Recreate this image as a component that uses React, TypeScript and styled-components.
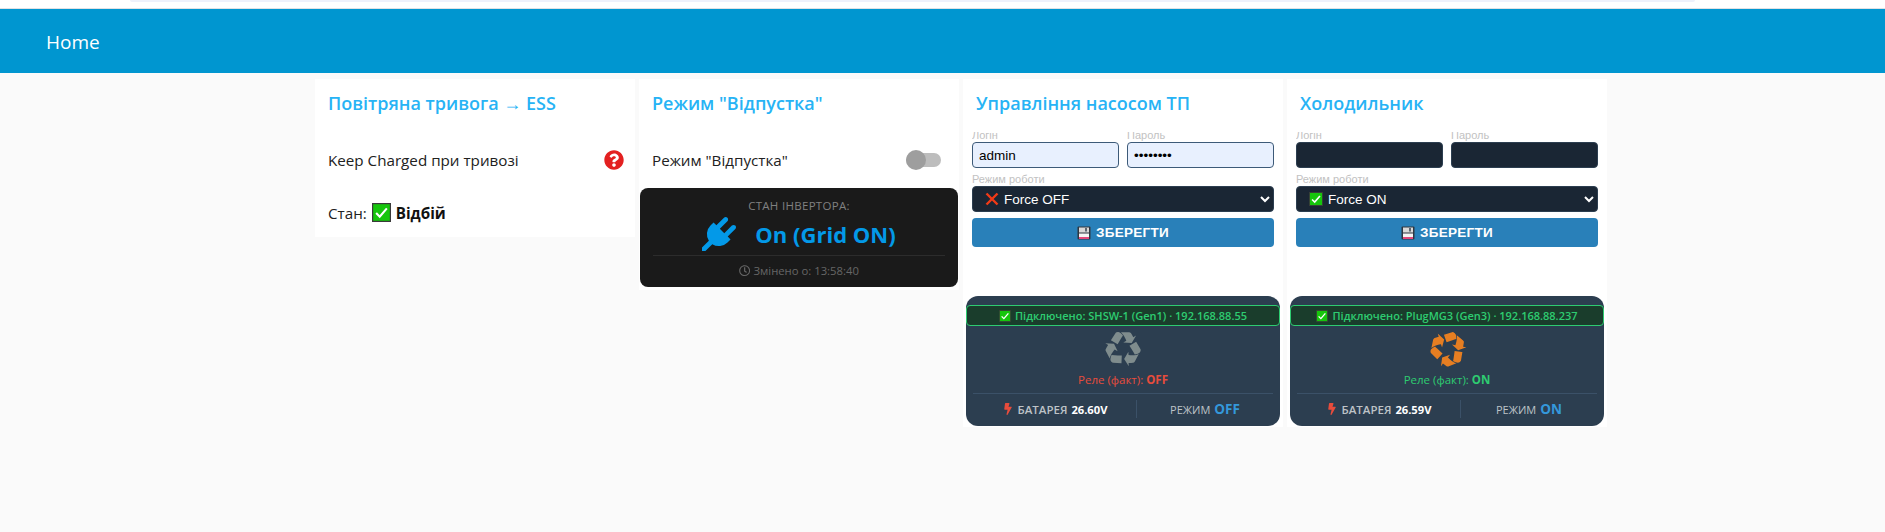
import React from "react";
import styled, { createGlobalStyle } from "styled-components";
import { FaBolt, FaRegClock, FaQuestionCircle } from "react-icons/fa";

const Global = createGlobalStyle`
  html, body { margin: 0; padding: 0; background: #fafafa; }
  body { font-family: "Open Sans", "Liberation Sans", sans-serif; height: 532px; overflow: hidden; }
`;

const TopStrip = styled.div`
  height: 8px;
  background: #fff;
  border-bottom: 1px solid #dfe1e5;
`;
const TabEdge = styled.div`
  height: 2px;
  margin: 0 190px 0 130px;
  background: #eef1fb;
  border-radius: 0 0 2px 2px;
`;
const Header = styled.header`
  height: 62px;
  padding: 2px 0 0 46px;
  background: #0096d0;
  color: #fff;
  display: flex;
  align-items: center;
  font-size: 19px;
  font-weight: 500;
`;
const Columns = styled.main`
  display: flex;
  align-items: flex-start;
  gap: 4px;
  padding: 6px 0 0 315px;
`;
const Card = styled.section`
  width: 320px;
  background: #fff;
  display: flex;
  flex-direction: column;
`;
const Title = styled.h2`
  margin: 0;
  padding: 10px 13px 0;
  height: 43px;
  font-size: 18px;
  line-height: 28px;
  font-weight: 600;
  color: #27b3f5;
`;
const Row = styled.div<{ $h: number }>`
  height: ${(p) => p.$h}px;
  display: flex;
  align-items: center;
  justify-content: space-between;
  padding: 0 13px;
  font-size: 15.2px;
  color: #212121;
`;
const Strong = styled.b`
  font-weight: 700;
  color: #111;
`;
const StatusText = styled.span`
  display: inline-flex;
  align-items: center;
  gap: 5px;
`;
const Help = styled(FaQuestionCircle)`
  color: #e32020;
  font-size: 20px;
  margin-right: -2px;
`;
const Switch = styled.div`
  position: relative;
  width: 35px;
  height: 14px;
  margin-right: 5px;
  border-radius: 7px;
  background: #bdbdbd;
`;
const Thumb = styled.div`
  position: absolute;
  left: 0;
  top: -3px;
  width: 20px;
  height: 20px;
  border-radius: 50%;
  background: #9e9e9e;
`;
const Inverter = styled.div`
  margin: 0 1px 3px;
  height: 99px;
  box-sizing: border-box;
  background: #1a1a1a;
  border-radius: 8px;
  padding: 0 13px;
  display: flex;
  flex-direction: column;
  align-items: center;
`;
const InverterLabel = styled.div`
  margin-top: 10px;
  font-size: 11.5px;
  line-height: 16px;
  letter-spacing: 0.3px;
  color: #808080;
`;
const InverterState = styled.div`
  display: flex;
  align-items: center;
  gap: 19px;
  height: 40px;
  font-size: 22px;
  font-weight: 700;
  color: #0399e8;
`;
const InverterTime = styled.div`
  align-self: stretch;
  margin-top: 1px;
  border-top: 1px solid #2c2c2c;
  padding-top: 7px;
  display: flex;
  justify-content: center;
  align-items: center;
  gap: 3px;
  font-size: 11.3px;
  line-height: 16px;
  color: #666;
`;
const Form = styled.div`
  padding: 0 9px;
  font-family: "Liberation Sans", Arial, sans-serif;
`;
const CredRow = styled.div`
  display: grid;
  grid-template-columns: 1fr 1fr;
  grid-template-rows: 36px;
  gap: 8px;
  height: 36px;
  overflow: hidden;
  align-items: end;
`;
const Field = styled.div`
  display: flex;
  flex-direction: column;
`;
const FieldLabel = styled.label`
  display: block;
  font-size: 11px;
  line-height: 14px;
  height: 14px;
  color: #c2c2c2;
`;
const Input = styled.div<{ $filled?: boolean }>`
  height: 26px;
  box-sizing: border-box;
  border: 1px solid ${(p) => (p.$filled ? "#3d5a78" : "#2c3e50")};
  border-radius: 4px;
  background: ${(p) => (p.$filled ? "#e8f0fe" : "#1a2634")};
  color: #000;
  padding: 0 6px;
  display: flex;
  align-items: center;
  font-size: 13.5px;
`;
const ModeLabel = styled(FieldLabel)`
  margin-top: 4px;
`;
const Select = styled.div`
  position: relative;
  height: 26px;
  box-sizing: border-box;
  border: 1px solid #2c3e50;
  border-radius: 4px;
  background: #1a2634;
  color: #fff;
  padding-left: 12px;
  display: flex;
  align-items: center;
  gap: 5px;
  font-size: 13.5px;
`;
const Chevron = styled.svg`
  position: absolute;
  right: 3px;
  top: 8px;
  width: 10px;
  height: 8px;
`;
const SaveButton = styled.button`
  margin-top: 6px;
  width: 100%;
  height: 29px;
  border: 0;
  border-radius: 4px;
  background: #2980b9;
  color: #fff;
  font: 700 13.5px "Liberation Sans", Arial, sans-serif;
  letter-spacing: 0.3px;
  display: flex;
  align-items: center;
  justify-content: center;
  gap: 5px;
`;
const Panel = styled.div`
  margin: 49px 3px 1px;
  height: 130px;
  box-sizing: border-box;
  background: #2c3e50;
  border-radius: 12px;
  display: flex;
  flex-direction: column;
  align-items: center;
  font-family: "Open Sans", sans-serif;
`;
const Connected = styled.div`
  margin-top: 9px;
  align-self: stretch;
  height: 21px;
  box-sizing: border-box;
  border: 1px solid #2ecc71;
  border-radius: 4px;
  background: #1a3d2c;
  color: #2ecc71;
  font-size: 11px;
  font-weight: 600;
  display: flex;
  align-items: center;
  justify-content: center;
  gap: 4px;
`;
const RecycleIcon = styled.svg<{ $on?: boolean }>`
  margin-top: 6px;
  width: 36px;
  height: 36px;
  margin-bottom: 1px;
  fill: ${(p) => (p.$on ? "#e67e22" : "#7f8c8d")};
  transform: rotate(${(p) => (p.$on ? 40 : 0)}deg);
`;
const Relay = styled.div<{ $on?: boolean }>`
  margin-top: 3px;
  font-size: 11.5px;
  line-height: 16px;
  color: ${(p) => (p.$on ? "#2ecc71" : "#e74c3c")};
`;
const Stats = styled.div`
  margin: 5px 7px 0;
  align-self: stretch;
  border-top: 1px solid #3b5168;
  padding-top: 6px;
  display: grid;
  grid-template-columns: 163px 1fr;
`;
const Stat = styled.div<{ $divider?: boolean }>`
  height: 18px;
  display: flex;
  align-items: center;
  justify-content: center;
  gap: 4px;
  font-size: 11px;
  color: #bdc3c7;
  border-left: ${(p) => (p.$divider ? "1px solid #3b5168" : "0")};
`;
const Bolt = styled(FaBolt)`
  color: #e74c3c;
  font-size: 12px;
`;
const StatLabel = styled.span<{ $bold?: boolean }>`
  font-size: ${(p) => (p.$bold ? 11.5 : 11)}px;
  font-weight: ${(p) => (p.$bold ? 600 : 400)};
`;
const Voltage = styled.b`
  color: #fff;
  font-size: 11.2px;
  font-weight: 700;
`;
const Mode = styled.b`
  color: #3498db;
  font-size: 13.5px;
  font-weight: 700;
`;

const CheckEmoji = ({ size = 16 }: { size?: number }) => (
  <svg width={size} height={size} viewBox="0 0 16 16" aria-hidden>
    <rect x="0.5" y="0.5" width="15" height="15" fill="#16c60c" stroke="#3a3a3a" />
    <path d="M3.5 8.5 6.5 11.5 12.5 4.5" fill="none" stroke="#fff" strokeWidth="1.8" />
  </svg>
);
const CrossEmoji = () => (
  <svg width="14" height="14" viewBox="0 0 14 14" aria-hidden>
    <path d="M1.5 1.5 12.5 12.5M12.5 1.5 1.5 12.5" stroke="#f03a17" strokeWidth="2.4" />
  </svg>
);
const FloppyEmoji = () => (
  <svg width="14" height="14" viewBox="0 0 14 14" aria-hidden>
    <rect x="0.5" y="0.5" width="13" height="13" rx="1" fill="#2f3640" />
    <rect x="2" y="1.5" width="10" height="5" fill="#d8d8d8" />
    <rect x="8" y="2" width="2" height="3.5" fill="#5c6670" />
    <rect x="2" y="7.5" width="10" height="3.5" fill="#f4f4f4" />
    <rect x="2" y="11" width="10" height="2" fill="#e3477a" />
  </svg>
);
const PlugIcon = () => (
  <svg width="34" height="34" viewBox="0 0 1792 1792" fill="currentColor" aria-hidden>
    <path d="M1755 453q37 38 37 90.5t-37 90.5l-401 400 150 150-160 160q-163 163-389.5 186.5t-411.5-100.5l-362 362h-181v-181l362-362q-124-185-100.5-411.5t186.5-389.5l160-160 150 150 400-401q38-37 91-37t90 37 37 90.5-37 90.5l-400 401 234 234 401-400q38-37 91-37t90 37z" />
  </svg>
);

const DeviceCard = (props: {
  title: string;
  filled?: boolean;
  on?: boolean;
  device: string;
  voltage: string;
}) => (
  <Card>
    <Title>{props.title}</Title>
    <Form>
      <CredRow>
        <Field>
          <FieldLabel>Логін</FieldLabel>
          <Input $filled={props.filled}>{props.filled ? "admin" : ""}</Input>
        </Field>
        <Field>
          <FieldLabel>Пароль</FieldLabel>
          <Input $filled={props.filled}>{props.filled ? "••••••••" : ""}</Input>
        </Field>
      </CredRow>
      <ModeLabel>Режим роботи</ModeLabel>
      <Select>
        {props.on ? <CheckEmoji size={14} /> : <CrossEmoji />}
        {props.on ? "Force ON" : "Force OFF"}
        <Chevron viewBox="0 0 10 8" aria-hidden>
          <path d="M1 2 5 6 9 2" fill="none" stroke="#fff" strokeWidth="2" />
        </Chevron>
      </Select>
      <SaveButton>
        <FloppyEmoji />
        ЗБЕРЕГТИ
      </SaveButton>
    </Form>
    <Panel>
      <Connected>
        <CheckEmoji size={12} />
        Підключено: {props.device}
      </Connected>
      <RecycleIcon $on={props.on} viewBox="0 0 1792 1792" aria-hidden>
        <path d="M836 1169l-15 368-2 22-420-29q-36-3-67-31.5t-47-65.5q-11-27-14.5-55t4-65 12-55 21.5-64 19-53q78 12 509 28zm-387-586l180 379-147-92q-63 72-111.5 144.5t-72.5 125-39.5 94.5-18.5 63l-4 21-190-357q-17-26-18-56t6-47l8-18q35-63 114-188l-140-86zm1231 517l-188 359q-12 29-36.5 46.5t-43.5 20.5l-18 4q-71 7-219 12l8 164-230-367 211-362 7 173q170 16 283 5t170-33zm-785-924q-47 63-265 435l-317-187-19-12 225-356q20-31 60-45t80-10q24 2 48.5 12t42 21 41.5 33 36 34.5 36 39.5 32 35zm655 307l212 363q18 37 12.5 76t-27.5 74q-13 20-33 37t-38 28-48.5 22-47 16-51.5 14-46 12q-34-72-265-436l313-195zm-143-226l142-83-220 373-419-20 151-86q-34-89-75-166t-75.5-123.5-64.5-80-47-46.5l-17-13 405 1q31-3 58 10.5t39 28.5l11 15q39 61 112 190z" />
      </RecycleIcon>
      <Relay $on={props.on}>
        Реле (факт): <b>{props.on ? "ON" : "OFF"}</b>
      </Relay>
      <Stats>
        <Stat>
          <Bolt />
          <StatLabel $bold>БАТАРЕЯ</StatLabel>
          <Voltage>{props.voltage}</Voltage>
        </Stat>
        <Stat $divider>
          <StatLabel>РЕЖИМ</StatLabel>
          <Mode>{props.on ? "ON" : "OFF"}</Mode>
        </Stat>
      </Stats>
    </Panel>
  </Card>
);

export default function App() {
  return (
    <>
      <Global />
      <TopStrip>
        <TabEdge />
      </TopStrip>
      <Header>Home</Header>
      <Columns>
        <Card>
          <Title>Повітряна тривога → ESS</Title>
          <Row $h={56}>
            Keep Charged при тривозі
            <Help />
          </Row>
          <Row $h={49}>
            <StatusText>
              Стан: <CheckEmoji size={19} /> <Strong>Відбій</Strong>
            </StatusText>
          </Row>
        </Card>
        <Card>
          <Title>Режим "Відпустка"</Title>
          <Row $h={56}>
            Режим "Відпустка"
            <Switch>
              <Thumb />
            </Switch>
          </Row>
          <Inverter>
            <InverterLabel>СТАН ІНВЕРТОРА:</InverterLabel>
            <InverterState>
              <PlugIcon />
              On (Grid ON)
            </InverterState>
            <InverterTime>
              <FaRegClock />
              Змінено о: 13:58:40
            </InverterTime>
          </Inverter>
        </Card>
        <DeviceCard
          title="Управління насосом ТП"
          filled
          device="SHSW-1 (Gen1) · 192.168.88.55"
          voltage="26.60V"
        />
        <DeviceCard
          title="Холодильник"
          on
          device="PlugMG3 (Gen3) · 192.168.88.237"
          voltage="26.59V"
        />
      </Columns>
    </>
  );
}
